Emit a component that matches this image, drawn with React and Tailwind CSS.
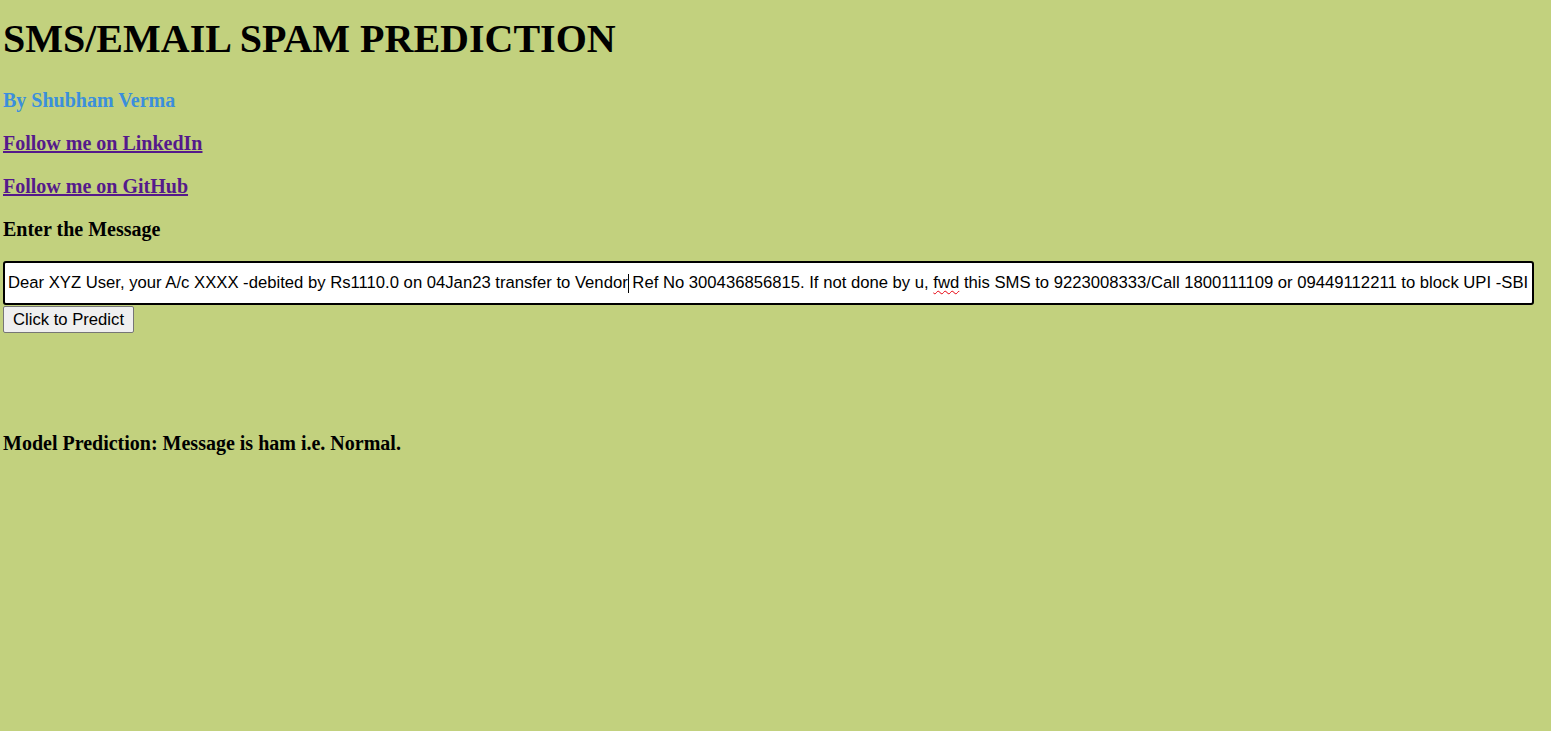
import React from "react";

const serif = { fontFamily: '"Liberation Serif", "Times New Roman", serif' };
const sans = { fontFamily: '"Liberation Sans", Arial, sans-serif' };

const App = () => {
  return (
    <div className="min-h-[731px] w-full bg-[#c2d17e] pl-[3px] text-black" style={serif}>
      <h1 className="pt-[16px] text-[40px] leading-[46px] font-bold">SMS/EMAIL SPAM PREDICTION</h1>

      <h4 className="mt-[27px] text-[20px] leading-[23px] font-bold text-[#3b8fdc]">By Shubham Verma</h4>
      <h4 className="mt-[20px] text-[20px] leading-[23px] font-bold">
        <a href="#" className="text-[#551a8b] underline">Follow me on LinkedIn</a>
      </h4>
      <h4 className="mt-[20px] text-[20px] leading-[23px] font-bold">
        <a href="#" className="text-[#551a8b] underline">Follow me on GitHub</a>
      </h4>
      <h4 className="mt-[20px] text-[20px] leading-[23px] font-bold">Enter the Message</h4>

      <div
        className="mt-[20px] h-[44px] w-[1531px] overflow-hidden whitespace-nowrap rounded-[3px] border-2 border-black bg-white pl-[3px] text-[16.67px] leading-[40px]"
        style={sans}
      >
        Dear XYZ User, your A/c XXXX -debited by Rs1110.0 on 04Jan23 transfer to Vendor
        <span className="mr-[-1px] inline-block h-[19px] w-px bg-black align-middle" />
        {" "}Ref No 300436856815. If not done by u,{" "}
        <span className="underline decoration-wavy decoration-red-600 decoration-1 underline-offset-2">fwd</span>
        {" "}this SMS to 9223008333/Call 1800111109 or 09449112211 to block UPI -SBI
      </div>

      <button
        className="mt-px h-[27px] w-[131px] rounded-[2px] border border-[#767676] bg-[#efefef] text-[16.67px] leading-[20px] text-black"
        style={sans}
      >
        Click to Predict
      </button>

      <h4 className="mt-[99px] text-[20px] leading-[23px] font-bold">Model Prediction: Message is ham i.e. Normal.</h4>
    </div>
  );
};

export default App;
